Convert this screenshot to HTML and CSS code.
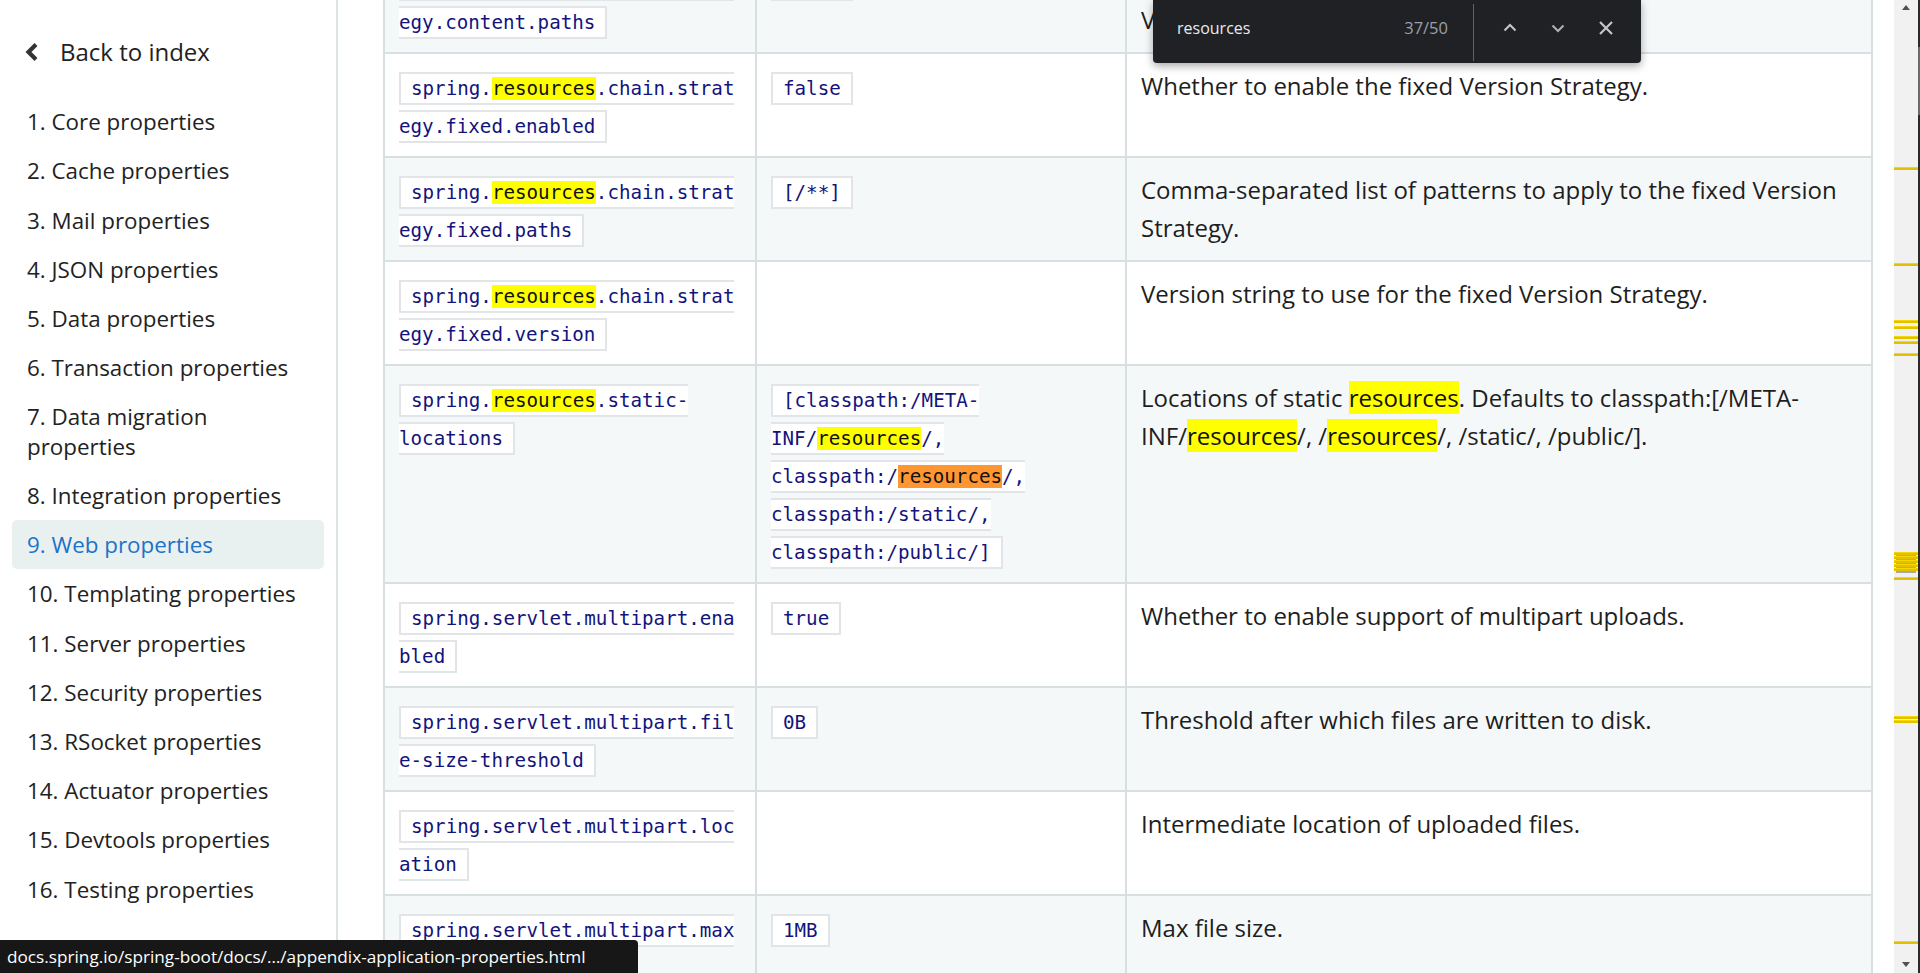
FILE: index.html
```html
<!DOCTYPE html>
<html lang="en">
<head>
<meta charset="utf-8">
<title>Application Properties</title>
<link rel="stylesheet" href="styles.css">
</head>
<body>
<div class="page">
  <nav class="toc">
    <a class="back" href="#">
      <svg class="back-icon" width="15" height="20" viewBox="0 0 15 20"><path d="M12 2.5 L4.5 10 L12 17.5" fill="none" stroke="#333" stroke-width="4.2"/></svg>
      <span>Back to index</span>
    </a>
    <ol class="toc-list">
      <li class="toc-item">1. Core properties</li>
      <li class="toc-item">2. Cache properties</li>
      <li class="toc-item">3. Mail properties</li>
      <li class="toc-item">4. JSON properties</li>
      <li class="toc-item">5. Data properties</li>
      <li class="toc-item">6. Transaction properties</li>
      <li class="toc-item">7. Data migration properties</li>
      <li class="toc-item">8. Integration properties</li>
      <li class="toc-item active">9. Web properties</li>
      <li class="toc-item">10. Templating properties</li>
      <li class="toc-item">11. Server properties</li>
      <li class="toc-item">12. Security properties</li>
      <li class="toc-item">13. RSocket properties</li>
      <li class="toc-item">14. Actuator properties</li>
      <li class="toc-item">15. Devtools properties</li>
      <li class="toc-item">16. Testing properties</li>
    </ol>
  </nav>

  <main class="content">
    <table class="props">
      <colgroup><col class="col-key"><col class="col-default"><col class="col-desc"></colgroup>
      <tbody>
        <tr>
          <td><code class="code">spring.<mark class="hl">resources</mark>.chain.strategy.content.paths</code></td>
          <td><code class="code">[/**]</code></td>
          <td>Comma-separated list of patterns to apply to the content Version Strategy.</td>
        </tr>
        <tr>
          <td><code class="code">spring.<mark class="hl">resources</mark>.chain.strategy.fixed.enabled</code></td>
          <td><code class="code">false</code></td>
          <td>Whether to enable the fixed Version Strategy.</td>
        </tr>
        <tr>
          <td><code class="code">spring.<mark class="hl">resources</mark>.chain.strategy.fixed.paths</code></td>
          <td><code class="code">[/**]</code></td>
          <td>Comma-separated list of patterns to apply to the fixed Version Strategy.</td>
        </tr>
        <tr>
          <td><code class="code">spring.<mark class="hl">resources</mark>.chain.strategy.fixed.version</code></td>
          <td></td>
          <td>Version string to use for the fixed Version Strategy.</td>
        </tr>
        <tr>
          <td><code class="code">spring.<mark class="hl">resources</mark>.static-locations</code></td>
          <td><code class="code">[classpath:/META-INF/<mark class="hl">resources</mark>/, classpath:/<mark class="hl current">resources</mark>/, classpath:/static/, classpath:/public/]</code></td>
          <td>Locations of static <mark class="hl">resources</mark>. Defaults to classpath:[/META-INF/<mark class="hl">resources</mark>/, /<mark class="hl">resources</mark>/, /static/, /public/].</td>
        </tr>
        <tr>
          <td><code class="code">spring.servlet.multipart.enabled</code></td>
          <td><code class="code">true</code></td>
          <td>Whether to enable support of multipart uploads.</td>
        </tr>
        <tr>
          <td><code class="code">spring.servlet.multipart.file-size-threshold</code></td>
          <td><code class="code">0B</code></td>
          <td>Threshold after which files are written to disk.</td>
        </tr>
        <tr>
          <td><code class="code">spring.servlet.multipart.location</code></td>
          <td></td>
          <td>Intermediate location of uploaded files.</td>
        </tr>
        <tr>
          <td><code class="code">spring.servlet.multipart.max-file-size</code></td>
          <td><code class="code">1MB</code></td>
          <td>Max file size.</td>
        </tr>
      </tbody>
    </table>
  </main>

  <div class="scrollbar">
    <div class="sb-track">
      <span class="sb-arrow sb-up"></span>
      <span class="sb-thumb"></span>
      <span class="sb-mark" style="top:167px"></span>
      <span class="sb-mark" style="top:263px"></span>
      <span class="sb-mark" style="top:320px"></span>
      <span class="sb-mark" style="top:326px"></span>
      <span class="sb-mark" style="top:336px"></span>
      <span class="sb-mark" style="top:341px"></span>
      <span class="sb-mark" style="top:353px"></span>
      <span class="sb-mark" style="top:552px"></span>
      <span class="sb-mark" style="top:556px"></span>
      <span class="sb-mark" style="top:560px"></span>
      <span class="sb-mark" style="top:564px"></span>
      <span class="sb-mark" style="top:568px"></span>
      <span class="sb-mark" style="top:577px"></span>
      <span class="sb-mark" style="top:716px"></span>
      <span class="sb-mark" style="top:720px"></span>
      <span class="sb-mark" style="top:941px"></span>
      <span class="sb-arrow sb-down"></span>
    </div>
    <div class="sb-edge"><span class="sb-edge-thumb"></span></div>
  </div>
</div>

<div class="findbar">
  <span class="find-query">resources</span>
  <span class="find-count">37/50</span>
  <span class="find-divider"></span>
  <button class="find-btn" aria-label="Previous"><svg width="20" height="20" viewBox="0 0 20 20"><path d="M4.5 12.5 L10 7 L15.5 12.5" fill="none" stroke="#c4c7c5" stroke-width="2"/></svg></button>
  <button class="find-btn" aria-label="Next"><svg width="20" height="20" viewBox="0 0 20 20"><path d="M4.5 7.5 L10 13 L15.5 7.5" fill="none" stroke="#aeb2b6" stroke-width="2"/></svg></button>
  <button class="find-btn" aria-label="Close"><svg width="20" height="20" viewBox="0 0 20 20"><path d="M4 4 L16 16 M16 4 L4 16" fill="none" stroke="#c4c7c5" stroke-width="2.2"/></svg></button>
</div>

<div class="status">docs.spring.io/spring-boot/docs/…/appendix-application-properties.html</div>
</body>
</html>
```

FILE: styles.css
```css
* { box-sizing: border-box; }
html, body { margin: 0; padding: 0; }
body {
  width: 1920px;
  height: 973px;
  overflow: hidden;
  position: relative;
  background: #fff;
  font-family: "Open Sans", "Noto Sans", sans-serif;
  color: #222;
}
.page { display: flex; height: 973px; }

/* sidebar */
.toc {
  width: 338px;
  flex: none;
  border-right: 2px solid #dce3e4;
  padding-top: 37px;
}
.back {
  display: flex;
  align-items: center;
  gap: 21px;
  padding-left: 24px;
  height: 29px;
  font-size: 24px;
  line-height: 29px;
  color: #222;
  text-decoration: none;
}
.back-icon { flex: none; }
.toc-list { list-style: none; margin: 31.4px 0 0; padding: 0 12px; }
.toc-item {
  padding: 9.9px 15px;
  font-size: 22.4px;
  line-height: 29.4px;
  border-radius: 5px;
  color: #222;
}
.toc-item.active { background: #e9f0f0; color: #1c73c8; }

/* content */
.content { flex: 1; overflow: hidden; padding-left: 45px; }
.props {
  border-collapse: collapse;
  table-layout: fixed;
  width: 1490px;
  margin-top: -52px;
  font-size: 24px;
  line-height: 38px;
  color: #1e1e1e;
}
.col-key { width: 372px; }
.col-default { width: 370px; }
.props td {
  border: 2px solid #d7dfe0;
  padding: 13px 14px;
  vertical-align: top;
  overflow-wrap: anywhere;
}
.props tr:nth-child(odd) td { background: #f5f8f9; }
.code {
  font-family: "DejaVu Sans Mono", "Liberation Mono", monospace;
  font-size: 19.2px;
  line-height: 1;
  color: #13137c;
  background: #fff;
  border: 2px solid #e2e5e8;
  padding: 3px 10px;
}
.hl { background: #ffff00; color: #111; }
.hl.current { background: #ff9632; }

/* fake scrollbar */
.scrollbar { width: 26px; flex: none; display: flex; }
.sb-track { position: relative; width: 24px; background: #f1f1f1; }
.sb-edge { position: relative; width: 2px; background: #2a2a2a; }
.sb-edge-thumb { position: absolute; left: 0; top: 47px; width: 2px; height: 68px; background: #6a6a6a; }
.sb-thumb { position: absolute; left: 2px; right: 2px; top: 553px; height: 20px; background: #a8a8a8; }
.sb-mark { position: absolute; left: 0; right: 0; height: 3px; background: #e2c000; border-top: 1px solid #f6d700; }
.sb-arrow { position: absolute; left: 8px; width: 0; height: 0; border-left: 4px solid transparent; border-right: 4px solid transparent; }
.sb-up { top: 5px; border-bottom: 5px solid #505050; }
.sb-down { bottom: 6px; border-top: 5px solid #505050; }

/* find bar overlay */
.findbar {
  position: absolute;
  left: 1153px;
  top: 0;
  width: 488px;
  height: 63px;
  background: #202124;
  border-radius: 0 0 4px 4px;
  box-shadow: 0 3px 8px rgba(0,0,0,0.35);
  display: flex;
  align-items: center;
  padding: 0 11px 0 24px;
  font-family: "Open Sans", "Noto Sans", sans-serif;
  font-size: 16px;
}
.find-query { flex: 1; color: #e8eaed; margin-top: -8px; }
.find-count { color: #9aa0a6; font-size: 16.5px; margin-right: 25px; margin-top: -8px; }
.find-divider { align-self: flex-start; margin-top: 4px; width: 1px; height: 57px; background: #5f6368; margin-right: 12px; }
.find-btn {
  width: 48px;
  height: 40px;
  margin-top: -8px;
  border: 0;
  padding: 0;
  background: transparent;
  display: flex;
  align-items: center;
  justify-content: center;
}

/* status bubble */
.status {
  position: absolute;
  left: 0;
  bottom: 0;
  width: 638px;
  height: 33px;
  background: #171717;
  border-top-right-radius: 4px;
  color: #fff;
  font-family: "Open Sans", "Noto Sans", sans-serif;
  font-size: 17.2px;
  line-height: 33px;
  padding-left: 7px;
  white-space: nowrap;
}
```
